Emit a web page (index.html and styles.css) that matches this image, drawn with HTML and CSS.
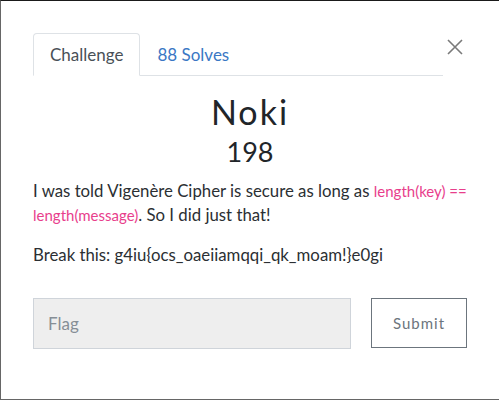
FILE: index.html
```html
<!DOCTYPE html>
<html>
<head>
<meta charset="utf-8">
<link rel="stylesheet" href="styles.css">
</head>
<body>
<div class="modal">
  <div class="tabs-row">
    <ul class="tabs">
      <li class="tab active">Challenge</li>
      <li class="tab link">88 Solves</li>
    </ul>
    <button class="close" aria-label="Close">
      <svg width="16" height="16" viewBox="0 0 16 16"><path d="M1 1L15 15M15 1L1 15" stroke="#7a7a7a" stroke-width="1.6" fill="none"/></svg>
    </button>
  </div>
  <h2 class="name">Noki</h2>
  <h3 class="value">198</h3>
  <div class="desc">
    <p>I was told Vigenère Cipher is secure as long as <code>length(key) == length(message)</code>. So I did just that!</p>
    <p>Break this: g4iu{ocs_oaeiiamqqi_qk_moam!}e0gi</p>
  </div>
  <div class="submit-row">
    <input class="flag" type="text" placeholder="Flag">
    <button class="submit">Submit</button>
  </div>
</div>
</body>
</html>
```
FILE: styles.css
```css
html, body { margin: 0; padding: 0; background: #fff; }
body { width: 499px; height: 400px; overflow: hidden; }
.modal {
  box-sizing: border-box;
  height: 400px;
  border-top: 1px solid #1a1a1a;
  border-left: 1px solid #666;
  border-bottom: 1px solid #666;
  padding: 32px 32px 0 32px;
  font-family: "Lato", "Liberation Sans", sans-serif;
  color: #2b2f33;
}
.tabs-row { display: flex; align-items: flex-start; }
.tabs {
  list-style: none; margin: 0; padding: 0;
  display: flex; width: 410px;
  border-bottom: 1px solid #dee2e6;
}
.tab {
  font-size: 17px; padding: 0 16px; height: 41px; line-height: 42px;
  margin-bottom: -1px;
}
.tab.active {
  border: 1px solid #dee2e6; border-bottom-color: #fff;
  border-radius: 4px 4px 0 0; color: #495057;
}
.tab.link { color: #3a77c4; border: 1px solid transparent; }
.close {
  margin-left: 4px; margin-top: 6px; background: none; border: 0; padding: 0;
  width: 16px; height: 16px; display: block;
}
.name {
  text-align: center; font-weight: 400; font-size: 34px; letter-spacing: 2px;
  margin: 14px 0 0 0; line-height: 44px; color: #212529;
}
.value {
  text-align: center; font-weight: 400; font-size: 27px;
  margin: 1px 0 0 0; line-height: 34px; color: #212529;
}
.desc { margin-top: 10px; font-size: 16.8px; line-height: 24px; }
.desc p { margin: 0 0 16px 0; }
code { font-family: inherit; color: #e83e8c; font-size: 15px; line-height: 1; }
.submit-row { display: flex; gap: 20px; margin-top: 31px; }
.flag {
  box-sizing: border-box; width: 318px; height: 51px;
  background: #eee; border: 1px solid #cfd4da; padding: 0 14px;
  font-family: inherit; font-size: 17px; outline: none;
}
.flag::placeholder { color: #868e96; }
.submit {
  box-sizing: border-box; width: 96px; height: 50px;
  background: #fff; border: 1px solid #6c757d; color: #6c757d;
  font-family: inherit; font-size: 15px; letter-spacing: 1px;
}
```
